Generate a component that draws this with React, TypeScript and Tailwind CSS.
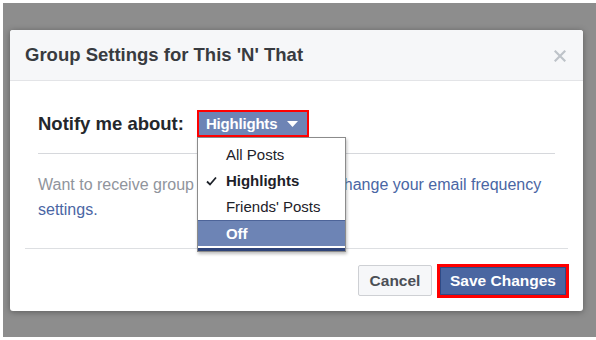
import React from 'react';

const menuItems = [
    { label: 'All Posts', checked: false, active: false },
    { label: 'Highlights', checked: true, active: false },
    { label: "Friends' Posts", checked: false, active: false },
    { label: 'Off', checked: false, active: true },
];

const CloseIcon = () => (
    <svg width="12" height="12" viewBox="0 0 12 12" className="mt-[2px]">
        <path d="M1.5 1.5 L10.5 10.5 M10.5 1.5 L1.5 10.5" stroke="#bec3c9" strokeWidth="2.2" strokeLinecap="square" />
    </svg>
);

const CheckIcon = () => (
    <svg width="11" height="10" viewBox="0 0 11 10">
        <path d="M1 5.5 L4 8.5 L10 1.5" stroke="#1d2129" strokeWidth="1.8" fill="none" />
    </svg>
);

const NotifyDropdown = () => (
    <div className="relative">
        <div className="h-[27px] w-[112px] border-[2px] border-[#ff0000] bg-[#6d84b5] flex items-center pl-[7px] gap-[10px]">
            <span className="text-[15px] font-bold text-white tracking-[-0.2px]">Highlights</span>
            <svg width="11" height="6" viewBox="0 0 11 6">
                <path d="M0 0 L11 0 L5.5 6 Z" fill="#ffffff" />
            </svg>
        </div>
        <div className="absolute left-0 top-[27px] w-[149px] bg-white border border-[#8b8b8b] shadow-[1px_2px_3px_rgba(0,0,0,0.25)] pt-[4px] z-10">
            {menuItems.map(item => (
                <div
                    key={item.label}
                    className={
                        item.active
                            ? 'relative h-[26px] flex items-center pl-[28px] bg-[#6d84b5] border-t border-[#4d6499] text-white text-[15px] font-bold'
                            : 'relative h-[26px] flex items-center pl-[28px] text-[15px] text-[#1d2129] ' + (item.checked ? 'font-bold' : '')
                    }
                >
                    {item.checked && (
                        <span className="absolute left-[8px] top-[8px]"><CheckIcon /></span>
                    )}
                    {item.label}
                </div>
            ))}
            <div className="h-[2px] bg-white" />
            <div className="h-[3px] bg-[#2f4479]" />
        </div>
    </div>
);

export default function App() {
    return (
        <div className="w-[596px] h-[340px] bg-white overflow-hidden font-['Liberation_Sans',Arial,sans-serif]">
            <div className="ml-[3px] mt-[3px] h-[334px] bg-[#8d8d8d] pt-[27px] pl-[7px]">
                <div className="w-[573px] h-[281px] bg-white rounded-[3px] shadow-[0_1px_6px_rgba(0,0,0,0.35)] flex flex-col">
                    {/* header */}
                    <div className="h-[51px] bg-[#f6f7f9] border-b border-[#e3e4e7] rounded-t-[3px] flex items-center justify-between pl-[15px] pr-[17px]">
                        <h1 className="text-[18.5px] font-bold text-[#383b40]">Group Settings for This 'N' That</h1>
                        <CloseIcon />
                    </div>

                    {/* body */}
                    <div className="px-[28px] pt-[29px]">
                        <div className="flex items-center gap-[13px]">
                            <span className="text-[18.5px] font-bold text-[#24272b]">Notify me about:</span>
                            <NotifyDropdown />
                        </div>
                        <div className="mt-[15px] h-px bg-[#d6d8dc]" />
                        <p className="mt-[18px] text-[16px] leading-[25px] text-[#90949c]">
                            Want to receive group emails? You could{' '}
                            <span className="ml-[4px] text-[#4a66a4]">change your email frequency settings.</span>
                        </p>
                    </div>

                    <div className="mx-[15px] mt-[26px] h-px bg-[#dddfe2]" />

                    {/* footer */}
                    <div className="flex justify-end items-center gap-[5px] pr-[14px] mt-[15px]">
                        <button className="h-[31px] w-[74px] rounded-[2px] border border-[#ced0d4] bg-[#f6f7f9] text-[15.5px] font-bold text-[#4b4f56]">
                            Cancel
                        </button>
                        <div className="h-[34px] w-[132px] border-[3px] border-[#ff0000] p-0">
                            <button className="h-full w-full border border-[#2e4a86] bg-[#4a66a1] text-[15.5px] font-bold text-white">
                                Save Changes
                            </button>
                        </div>
                    </div>
                </div>
            </div>
        </div>
    );
}
